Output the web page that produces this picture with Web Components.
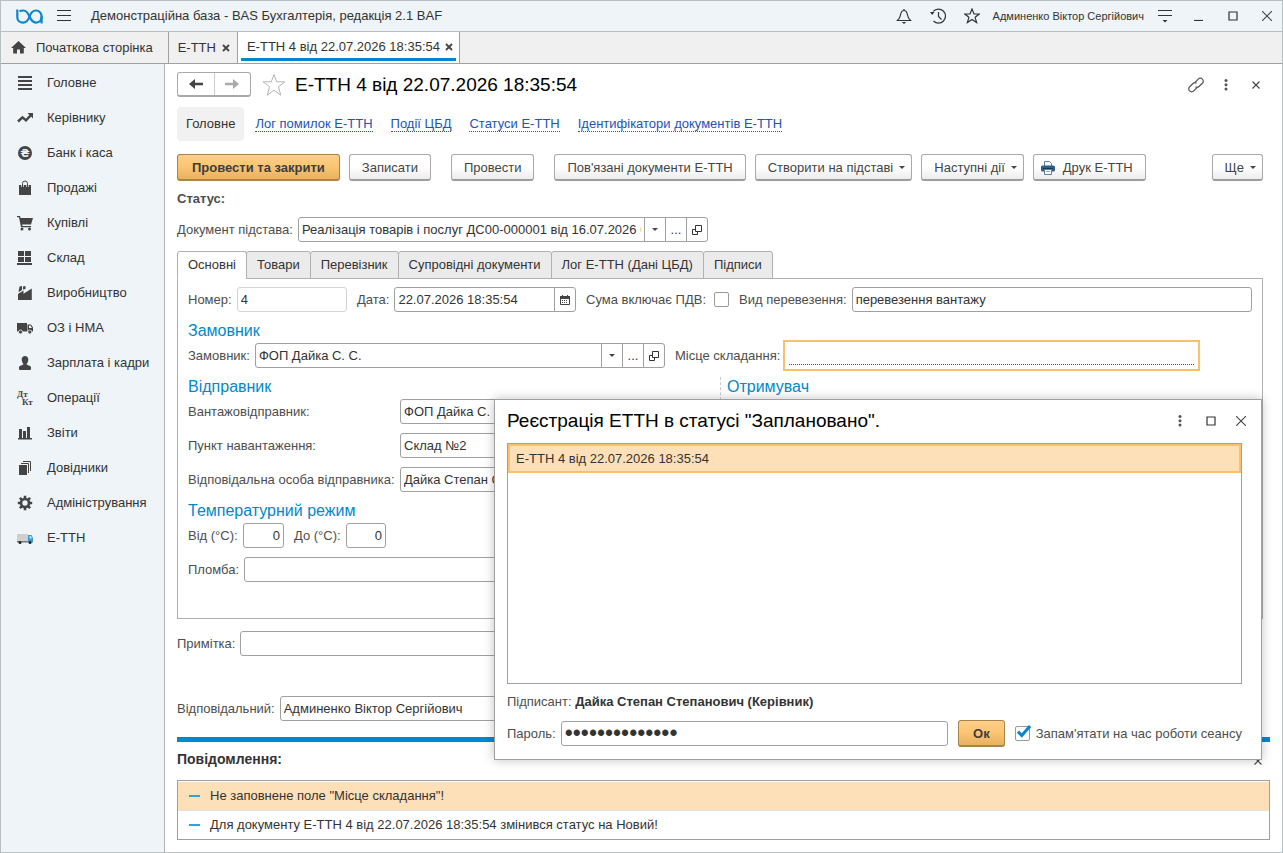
<!DOCTYPE html>
<html lang="uk">
<head>
<meta charset="utf-8">
<title>Е-ТТН 4 від 22.07.2026 18:35:54</title>
<style>
  html, body { margin: 0; height: 100%; }
  body {
    font-family: "Liberation Sans", Arial, sans-serif;
    font-size: 13px;
    line-height: 16px;
    color: #333;
    --bas-line: #a0a0a0;
    --bas-frame: #b6bfc1;
    --bas-tint: #eef4f7;
    --bas-label: #4d4d4d;
    --bas-blue: #0088cc;
    --bas-amber: #fbc16a;
    --bas-peach: #fde0b8;
  }
</style>
</head>
<body>
<bas-app></bas-app>

<script>
const ICONS = {
  logo: ['0 0 27 15', '<g fill="none" stroke="#0a87cb" stroke-width="2.2"><path d="M1.3 .5V8.5C1.3 11.5 4 13.6 7 13.6 10.500 13.600 12.300 11 13.500 7.500 14.700 4 16.500 1.500 20 1.500 23.500 1.500 25.600 4.500 25.600 7.500V14.500"/><path d="M3.500 2.400C4.600 1.700 6 1.500 7.500 1.500 10.500 1.500 12 4 13.500 7.500 15 11 16.500 13.600 20 13.600 23.500 13.600 25.600 11 25.600 7.500"/></g>'],
  burger: ['0 0 14 12', '<path d="M0 .5h14M0 5.500h14M0 10.500h14" stroke="#333" fill="none"/>'],
  bell: ['0 0 16 16', '<path d="M1.500 12.500h13c-1.500-1.500-2.500-2.500-3-5.500C11 4 10.500 2.500 8 2.500S5 4 4.500 7c-.5 3-1.500 4-3 5.500zM8 2.500V1" fill="none" stroke="#333" stroke-width="1.200"/><path d="M6 14h4l-1 1.500H7z" fill="#333"/>'],
  history: ['0 0 16 16', '<path d="M3.300 3.400A7 7 0 1 1 3.500 13" fill="none" stroke="#333" stroke-width="1.200"/><path d="M8.500 4v4.500l3 3" fill="none" stroke="#333" stroke-width="1.200"/><path d="M0 4h4.500L2.200 7z" fill="#333"/>'],
  star: ['0 0 16 16', '<path d="M8 1l2 5h5.200l-4.100 3.300 1.500 5.200L8 11.500l-4.600 3 1.500-5.200L.8 6H6z" fill="none" stroke="currentColor" stroke-width="1.200"/>'],
  bigstar: ['0 0 24 24', '<path d="M12 1.500l2.700 7.300h8.200l-6.500 5 2.400 8.400L12 17.200l-6.800 5 2.400-8.400-6.500-5h8.200z" fill="#fff" stroke="#b4b4b4" stroke-width="1"/>'],
  settings: ['0 0 14 14', '<path d="M0 1.500h14M0 6.500h14" stroke="#333" stroke-width="1.200"/><path d="M4.500 11h5L7 13.500z" fill="#333"/>'],
  minimize: ['0 0 10 10', '<path d="M0 9.500h9" stroke="#333" stroke-width="1.200"/>'],
  maximize: ['0 0 10 10', '<path d="M1 1h8v8H1z" fill="none" stroke="#333" stroke-width="1.200"/>'],
  close: ['0 0 10 10', '<path d="M0 0l10 10M10 0L0 10" stroke="#444" stroke-width="1.100"/>'],
  tabclose: ['0 0 8 8', '<path d="M1 1l6 6M7 1L1 7" stroke="#444" stroke-width="1.800"/>'],
  smallclose: ['0 0 8 8', '<path d="M.5 .5l7 7M7.500 .5l-7 7" stroke="#444" stroke-width="1.100"/>'],
  home: ['0 0 15 13', '<path d="M7.500 0L0 7h2.200v5.500H6V8.500h3v4h3.800V7H15z" fill="#444"/>'],
  link: ['0 0 16 16', '<g fill="none" stroke="#555" stroke-width="1.200"><path d="M7 5.500l3.200-3.400a2.900 2.900 0 0 1 4.200 0 2.900 2.900 0 0 1 0 4.200L11 9.500c-1 1-2.500 1-3.500.3"/><path d="M9 10.500l-3.200 3.400a2.900 2.900 0 0 1-4.200 0 2.900 2.900 0 0 1 0-4.200L5 6.500c1-1 2.500-1 3.500-.3"/></g>'],
  dots: ['0 0 4 12', '<g fill="#555"><circle cx="2" cy="1.500" r="1.500"/><circle cx="2" cy="5.800" r="1.500"/><circle cx="2" cy="10.100" r="1.500"/></g>'],
  back: ['0 0 14 10', '<path d="M0 5l6-5v3.700h8v2.600H6V10z" fill="#444"/>'],
  forward: ['0 0 14 10', '<path d="M14 5L8 0v3.700H0v2.600h8V10z" fill="#aaa"/>'],
  caret: ['0 0 6 3', '<path d="M0 0h6L3 3z" fill="#444"/>'],
  open: ['0 0 10 10', '<path d="M3.500 .5h6v6h-6zM3.500 4.500h-3v5h5v-3" fill="none" stroke="#333"/>'],
  calendar: ['0 0 10 10', '<path d="M.5 1.500h9v8h-9z" fill="#fff" stroke="#444"/><path d="M0 1h10v3H0z" fill="#444"/><path d="M2.500 0v2M7.500 0v2" stroke="#444"/><path d="M2 5.500h6M2 7.500h6" stroke="#444" stroke-dasharray="1 1"/>'],
  printer: ['0 0 14 14', '<path d="M3.500 5V.5h5l2 2V5" fill="#fff" stroke="#5d7d9c"/><rect y="4.500" width="14" height="6" rx="1.500" fill="#2d5f8b"/><path d="M2 7.500h10" stroke="#12395c"/><path d="M3.500 8.500h7v5h-7z" fill="#fff" stroke="#5d7d9c"/><path d="M5 10.500h4" stroke="#9ab"/>'],
  main: ['0 0 16 16', '<path d="M1 1h14v2H1zM1 5h14v2H1zM1 9h14v2H1zM1 13h14v2H1z" fill="#444"/>'],
  trend: ['0 0 16 16', '<path d="M1 11.500l4.500-4.200 3.500 3L14 5" fill="none" stroke="#444" stroke-width="2.400"/><path d="M10.500 3H16v5.500z" fill="#444"/>'],
  money: ['0 0 16 16', '<circle cx="8" cy="8" r="7" fill="#444"/><text x="8" y="12" text-anchor="middle" font-family="DejaVu Sans, sans-serif" font-weight="bold" font-size="11" fill="#eef4f7">₴</text>'],
  bag: ['0 0 16 16', '<path d="M2 5h12v10H2z" fill="#444"/><path d="M5.500 7V4a2.500 2.500 0 0 1 5 0v3" fill="none" stroke="#eef4f7" stroke-width="2.400"/><path d="M5.500 7V3.500a2.500 2.500 0 0 1 5 0V7" fill="none" stroke="#444"/>'],
  cart: ['0 0 16 16', '<path d="M0 1h3l.6 2H16l-2 6.500H5.200l.3 1.500H14v1.300H4L2 2.300H0z" fill="#444"/><circle cx="5" cy="14" r="1.500" fill="#444"/><circle cx="12.500" cy="14" r="1.500" fill="#444"/>'],
  stock: ['0 0 16 16', '<path d="M1 1h6v5H1zM8 1h6v5H8zM1 7h6v5H1zM8 7h6v5H8zM0 13h15v2H0z" fill="#444"/>'],
  factory: ['0 0 16 16', '<path d="M1 15V9l5.500-3.500v3.300L14.800 3.500V15z" fill="#444"/><path d="M2.500 1.500L5 1v4L1.500 7.200zM6 1.500L8.500 1v3L6 4.500z" fill="#444"/>'],
  truck: ['0 0 16 16', '<path d="M0 3h10v8.500H0z" fill="#444"/><path d="M10.500 4.500H14l2 3v4h-5.500z" fill="#444"/><path d="M12 5.500h1.500L15 8h-3z" fill="#eef4f7"/><circle cx="3.500" cy="12" r="2" fill="#444" stroke="#eef4f7" stroke-width=".8"/><circle cx="12.800" cy="12" r="2" fill="#444" stroke="#eef4f7" stroke-width=".8"/>'],
  person: ['0 0 16 16', '<path d="M8 1c2 0 3.300 1.300 3.300 3.500S10 8.800 9.500 9.200c.5 1 4.500 1 4.500 3.300V14q0 1-1 1H3q-1 0-1-1v-1.500c0-2.300 4-2.300 4.500-3.300C6 8.800 4.700 6.700 4.700 4.500S6 1 8 1z" fill="#444"/>'],
  dtkt: ['0 0 16 16', '<g font-family="Liberation Serif, serif" font-weight="bold" font-size="9" fill="#444"><text x="0" y="7">Дт</text><text x="5" y="15">Кт</text></g>'],
  chart: ['0 0 16 16', '<path d="M2 4h3v9H2zM6 6h3v7H6zM10 2h3v11h-3zM1 13h14v1.500H1z" fill="#444"/>'],
  books: ['0 0 16 16', '<path d="M2 5h8v10H2z" fill="#444"/><path d="M4 3.500h7.500V13M6 1.500h7.500V11" fill="none" stroke="#444"/>'],
  gear: ['0 0 16 16', '<circle cx="8" cy="8" r="4" fill="none" stroke="#444" stroke-width="2.600"/><path d="M8 .8v2.500M8 12.700v2.500M.8 8h2.500M12.700 8h2.500M2.900 2.900l1.800 1.800M11.300 11.300l1.800 1.800M13.100 2.900l-1.800 1.800M4.700 11.300l-1.800 1.800" stroke="#444" stroke-width="2.600"/>'],
  ettn: ['0 0 16 16', '<path d="M0 4h11v7H0z" fill="#cfcfcf"/><path d="M0 11h16v1.500H0z" fill="#777"/><path d="M11 5h3.500L16 8v4h-5z" fill="#3a9bd0"/><path d="M12.500 6h1.500l1 2.500h-2.500z" fill="#bfe2f5"/><circle cx="3" cy="12.500" r="1.500" fill="#222"/><circle cx="13" cy="12.500" r="1.500" fill="#222"/>'],
};

class BasIcon extends HTMLElement {
  connectedCallback() {
    const [box, body] = ICONS[this.getAttribute('name')];
    const [, , w, h] = box.split(' ');
    this.attachShadow({ mode: 'open' }).innerHTML = `
      <style>
        :host { display: inline-flex; flex-shrink: 0; }
        svg { display: block; }
      </style>
      <svg width="${w}" height="${h}" viewBox="${box}" aria-hidden="true">${body}</svg>
    `;
  }
}

/* Push button: default, primary (amber) or with a menu caret */
class BasButton extends HTMLElement {
  connectedCallback() {
    const icon = this.getAttribute('icon');
    this.attachShadow({ mode: 'open', delegatesFocus: true }).innerHTML = `
      <style>
        :host { display: block; flex-shrink: 0; }
        button {
          display: flex;
          align-items: center;
          box-sizing: border-box;
          height: 27px;
          padding: 1px 12px 0;
          border: 1px solid #a9a9a9;
          border-bottom: 2px solid #9c9c9c;
          border-radius: 3px;
          background: linear-gradient(#fff 50%, #ececec);
          font: inherit;
          color: #444;
          white-space: nowrap;
        }
        :host([primary]) button {
          padding: 1px 14px 0;
          border-color: #a8834a;
          background: linear-gradient(#fdcf8c, #fbc471 50%, #e9b163);
          font-weight: bold;
          color: #3d3d3d;
        }
        :host([menu]) button { gap: 6px; padding-right: 6px; }
        :host([icon]) button { gap: 8px; padding-left: 7px; }
      </style>
      <button type="button">
        ${icon ? `<bas-icon name="${icon}"></bas-icon>` : ''}
        <slot></slot>
        ${this.hasAttribute('menu') ? '<bas-icon name="caret"></bas-icon>' : ''}
      </button>
    `;
  }
}

class BasIconButton extends HTMLElement {
  connectedCallback() {
    this.attachShadow({ mode: 'open' }).innerHTML = `
      <style>
        :host { display: flex; }
        button {
          display: flex;
          align-items: center;
          justify-content: center;
          width: 100%;
          padding: 0;
          border: 0;
          background: none;
          color: #333;
        }
      </style>
      <button type="button" aria-label="${this.getAttribute('label')}">
        <bas-icon name="${this.getAttribute('name')}"></bas-icon>
      </button>
    `;
  }
}

/* Labelled input with optional choice buttons: list, more, open, calendar */
class BasField extends HTMLElement {
  connectedCallback() {
    const attr = (name, fallback = '') => this.getAttribute(name) || fallback;
    const titles = { list: 'Вибрати зі списку', more: 'Показати всі', open: 'Відкрити', calendar: 'Календар' };
    const faces = { list: '<bas-icon name="caret"></bas-icon>', more: '...', open: '<bas-icon name="open"></bas-icon>', calendar: '<bas-icon name="calendar"></bas-icon>' };
    const buttons = attr('buttons').split(' ').filter(Boolean)
      .map(b => `<button type="button" aria-label="${titles[b]}">${faces[b]}</button>`).join('');

    this.attachShadow({ mode: 'open' }).innerHTML = `
      <style>
        :host { display: flex; align-items: center; gap: 5px; min-width: 0; }
        label { flex: 0 0 auto; width: var(--label-width, auto); color: var(--bas-label); white-space: nowrap; }
        .box {
          display: flex;
          flex: 1 1 0;
          min-width: 0;
          box-sizing: border-box;
          height: 25px;
          border: 1px solid var(--bas-line);
          border-radius: 3px;
          background: #fff;
        }
        input {
          flex: 1;
          min-width: 0;
          width: 100%;
          box-sizing: border-box;
          padding: 0 3px;
          border: 0;
          outline: 0;
          background: none;
          font: inherit;
          color: #333;
        }
        input[type="password"] { font-size: 23px; }
        button {
          display: flex;
          align-items: center;
          justify-content: center;
          box-sizing: border-box;
          width: 21px;
          padding: 0;
          border: 0;
          border-left: 1px solid var(--bas-line);
          background: none;
          font: inherit;
          color: #333;
        }
        :host([numeric]) input { text-align: right; }
        :host([readonly]) .box { border-color: #d4d4d4; }
        :host([required]) { gap: 3px; }
        :host([required]) .box {
          height: 31px;
          margin: -3px 0;
          padding: 4px;
          border: 2px solid var(--bas-amber);
          border-radius: 0;
        }
        :host([required]) input { border-bottom: 1px dotted #f00; }
      </style>
      <label for="input">${attr('label')}</label>
      <div class="box">
        <input id="input" type="${attr('type', 'text')}" ${this.hasAttribute('readonly') ? 'readonly' : ''}>
        ${buttons}
      </div>
    `;
    this.shadowRoot.getElementById('input').value = attr('value');
  }
}

class BasCheckbox extends HTMLElement {
  connectedCallback() {
    this.attachShadow({ mode: 'open' }).innerHTML = `
      <style>
        :host { display: block; flex-shrink: 0; color: var(--bas-label); }
        label { display: flex; align-items: center; gap: 6px; white-space: nowrap; }
        :host([label-first]) label { flex-direction: row-reverse; gap: 8px; }
        .mark { position: relative; display: flex; }
        input {
          appearance: none;
          width: 15px;
          height: 15px;
          margin: 0;
          border: 1px solid #999;
          border-radius: 2px;
          background: #fff;
        }
        svg { position: absolute; left: 2px; bottom: 3px; display: none; }
        input:checked + svg { display: block; }
      </style>
      <label>
        <span class="mark">
          <input type="checkbox" ${this.hasAttribute('checked') ? 'checked' : ''}>
          <svg width="14" height="13" viewBox="0 0 14 13"><path d="M1 6.500l3.800 4L13 1" fill="none" stroke="#0a87cb" stroke-width="3"/></svg>
        </span>
        <slot></slot>
      </label>
    `;
  }
}

class BasTitlebar extends HTMLElement {
  connectedCallback() {
    this.attachShadow({ mode: 'open' }).innerHTML = `
      <style>
        :host {
          display: flex;
          align-items: center;
          box-sizing: border-box;
          height: 31px;
          padding: 0 8px 0 15px;
          border-bottom: 1px solid var(--bas-frame);
          background: var(--bas-tint);
        }
        .menu { margin: 0 20px 0 14px; }
        .tools { display: flex; align-items: center; margin-left: auto; }
        .tools bas-icon-button { width: 34px; }
        .user { margin: 0 4px; font-size: 11px; }
        .tools .close { width: 14px; margin-left: 10px; }
      </style>
      <bas-icon name="logo"></bas-icon>
      <bas-icon-button class="menu" name="burger" label="Меню"></bas-icon-button>
      <span>Демонстраційна база - BAS Бухгалтерія, редакція 2.1 BAF</span>
      <div class="tools">
        <bas-icon-button name="bell" label="Сповіщення"></bas-icon-button>
        <bas-icon-button name="history" label="Історія"></bas-icon-button>
        <bas-icon-button name="star" label="Вибране"></bas-icon-button>
        <span class="user">Админенко Віктор Сергійович</span>
        <bas-icon-button name="settings" label="Налаштування"></bas-icon-button>
        <bas-icon-button name="minimize" label="Згорнути"></bas-icon-button>
        <bas-icon-button name="maximize" label="Розгорнути"></bas-icon-button>
        <bas-icon-button class="close" name="close" label="Закрити"></bas-icon-button>
      </div>
    `;
  }
}

class BasTab extends HTMLElement {
  connectedCallback() {
    this.attachShadow({ mode: 'open' }).innerHTML = `
      <style>
        :host {
          display: flex;
          align-items: center;
          gap: 6px;
          padding: 0 7px 0 9px;
          border-right: 1px solid var(--bas-line);
          white-space: nowrap;
        }
        :host([home]) { gap: 10px; padding: 0 15px 0 10px; }
        :host([active]) {
          gap: 5px;
          padding: 0;
          background: #fff;
        }
        .face { display: flex; align-items: center; gap: inherit; height: 100%; }
        :host([active]) .face {
          box-sizing: border-box;
          height: 29px;
          align-self: flex-start;
          margin: 0 3px;
          padding: 4px 3px 0 6px;
          border-bottom: 3px solid var(--bas-blue);
        }
      </style>
      <div class="face">
        ${this.hasAttribute('home') ? '<bas-icon name="home"></bas-icon>' : ''}
        <slot></slot>
        ${this.hasAttribute('home') ? '' : '<bas-icon-button name="tabclose" label="Закрити"></bas-icon-button>'}
      </div>
    `;
  }
}

class BasTabstrip extends HTMLElement {
  connectedCallback() {
    this.attachShadow({ mode: 'open' }).innerHTML = `
      <style>
        :host {
          display: flex;
          box-sizing: border-box;
          height: 32px;
          border-bottom: 1px solid var(--bas-line);
          background: #f0f0f0;
        }
      </style>
      <bas-tab home>Початкова сторінка</bas-tab>
      <bas-tab>Е-ТТН</bas-tab>
      <bas-tab active>Е-ТТН 4 від 22.07.2026 18:35:54</bas-tab>
    `;
  }
}

class BasSidebar extends HTMLElement {
  connectedCallback() {
    const sections = [
      ['main', 'Головне'], ['trend', 'Керівнику'], ['money', 'Банк і каса'],
      ['bag', 'Продажі'], ['cart', 'Купівлі'], ['stock', 'Склад'],
      ['factory', 'Виробництво'], ['truck', 'ОЗ і НМА'], ['person', 'Зарплата і кадри'],
      ['dtkt', 'Операції'], ['chart', 'Звіти'], ['books', 'Довідники'],
      ['gear', 'Адміністрування'], ['ettn', 'Е-ТТН'],
    ];
    this.attachShadow({ mode: 'open' }).innerHTML = `
      <style>
        :host {
          display: block;
          box-sizing: border-box;
          width: 164px;
          padding-top: 1px;
          border-right: 1px solid #b0b4b6;
          background: var(--bas-tint);
        }
        a {
          display: flex;
          align-items: center;
          gap: 14px;
          height: 35px;
          padding-left: 16px;
          color: #333;
          text-decoration: none;
          white-space: nowrap;
        }
      </style>
      <nav>
        ${sections.map(([icon, text]) => `<a href="#"><bas-icon name="${icon}"></bas-icon><span>${text}</span></a>`).join('')}
      </nav>
    `;
  }
}

class BasFormHeader extends HTMLElement {
  connectedCallback() {
    this.attachShadow({ mode: 'open' }).innerHTML = `
      <style>
        :host { display: block; }
        .top { display: flex; align-items: center; height: 25px; }
        .history {
          display: flex;
          box-sizing: border-box;
          width: 74px;
          height: 25px;
          margin-right: 11px;
          border: 1px solid #a9a9a9;
          border-bottom-width: 2px;
          border-radius: 3px;
        }
        .history bas-icon-button { flex: 1; }
        .history bas-icon-button + bas-icon-button { border-left: 1px solid #ccc; }
        h1 { margin: 0 0 0 9px; font-size: 19px; line-height: 24px; font-weight: normal; color: #000; }
        .tools { display: flex; margin-left: auto; }
        .tools bas-icon-button { width: 30px; }
        .links { display: flex; align-items: center; gap: 18px; margin-top: 10px; }
        .current {
          margin-right: -7px;
          padding: 9px;
          border-radius: 4px;
          background: #f1f1f1;
        }
        a { color: #2253b5; text-decoration: none; border-bottom: 1px dotted #2253b5; line-height: 14px; }
      </style>
      <div class="top">
        <div class="history">
          <bas-icon-button name="back" label="Назад"></bas-icon-button>
          <bas-icon-button name="forward" label="Вперед"></bas-icon-button>
        </div>
        <bas-icon name="bigstar"></bas-icon>
        <h1>Е-ТТН 4 від 22.07.2026 18:35:54</h1>
        <div class="tools">
          <bas-icon-button name="link" label="Посилання"></bas-icon-button>
          <bas-icon-button name="dots" label="Ще"></bas-icon-button>
          <bas-icon-button name="smallclose" label="Закрити"></bas-icon-button>
        </div>
      </div>
      <nav class="links">
        <span class="current">Головне</span>
        <a href="#">Лог помилок Е-ТТН</a>
        <a href="#">Події ЦБД</a>
        <a href="#">Статуси Е-ТТН</a>
        <a href="#">Ідентифікатори документів Е-ТТН</a>
      </nav>
    `;
  }
}

class BasToolbar extends HTMLElement {
  connectedCallback() {
    this.attachShadow({ mode: 'open' }).innerHTML = `
      <style>
        :host { display: flex; gap: 20px; }
        .group { display: flex; gap: 9px; }
        .group:last-child { margin-left: auto; }
      </style>
      <div class="group">
        <bas-button primary>Провести та закрити</bas-button>
        <bas-button>Записати</bas-button>
      </div>
      <div class="group">
        <bas-button>Провести</bas-button>
      </div>
      <div class="group">
        <bas-button>Пов'язані документи Е-ТТН</bas-button>
        <bas-button menu>Створити на підставі</bas-button>
        <bas-button menu>Наступні дії</bas-button>
        <bas-button icon="printer">Друк Е-ТТН</bas-button>
      </div>
      <div class="group">
        <bas-button menu>Ще</bas-button>
      </div>
    `;
  }
}

/* Titled group of rows inside the page */
class BasGroup extends HTMLElement {
  connectedCallback() {
    this.attachShadow({ mode: 'open' }).innerHTML = `
      <style>
        :host { display: flex; flex-direction: column; gap: 9px; }
        h2 {
          margin: 0 0 -7px;
          font-size: 16px;
          line-height: 20px;
          font-weight: normal;
          color: var(--bas-blue);
        }
      </style>
      <h2>${this.getAttribute('heading')}</h2>
      <slot></slot>
    `;
  }
}

class BasPages extends HTMLElement {
  connectedCallback() {
    const pages = ['Основні', 'Товари', 'Перевізник', 'Супровідні документи', 'Лог Е-ТТН (Дані ЦБД)', 'Підписи'];
    this.attachShadow({ mode: 'open' }).innerHTML = `
      <style>
        :host { display: block; }
        .tabs { display: flex; margin-bottom: -1px; }
        button {
          box-sizing: border-box;
          height: 28px;
          margin-left: -1px;
          padding: 0 10px;
          border: 1px solid #b0b0b0;
          border-radius: 3px 3px 0 0;
          background: #ebebeb;
          font: inherit;
          color: #333;
          white-space: nowrap;
        }
        button:first-child { margin-left: 0; }
        button[aria-selected="true"] { border-bottom-color: #fff; background: #fff; }
        .page { padding: 8px 10px 36px; border: 1px solid #b0b0b0; }
      </style>
      <div class="tabs" role="tablist">
        ${pages.map((p, i) => `<button type="button" role="tab" aria-selected="${i === 0}">${p}</button>`).join('')}
      </div>
      <div class="page" role="tabpanel"><slot></slot></div>
    `;
  }
}

class BasDocument extends HTMLElement {
  connectedCallback() {
    this.attachShadow({ mode: 'open' }).innerHTML = `
      <style>
        :host { display: block; padding: 8px 19px 16px 12px; }
        bas-form-header { margin-right: -8px; }
        bas-toolbar { margin-top: 13px; }
        .status { margin: 10px 0; font-weight: bold; color: var(--bas-label); }
        .basis { width: 531px; }
        bas-pages { margin-top: 9px; }
        .rows { display: flex; flex-direction: column; gap: 9px; }
        .row { display: flex; align-items: center; gap: 10px; }
        .number { width: 159px; }
        .date { width: 219px; }
        .kind { flex: 1; }
        .customer { width: 477px; }
        .place { width: 525px; }
        .parties { display: grid; grid-template-columns: 1fr 1fr; }
        .sender { --label-width: 207px; padding-right: 8px; }
        .receiver { padding-left: 6px; border-left: 1px dashed #ccc; }
        .from { width: 96px; }
        .to { width: 92px; }
        .note { margin-top: 12px; width: 700px; }
        .owner { margin-top: 40px; width: 500px; }
        .seal { width: 524px; }
      </style>
      <bas-form-header></bas-form-header>
      <bas-toolbar></bas-toolbar>
      <div class="status">Статус:</div>
      <bas-field class="basis" label="Документ підстава:" value="Реалізація товарів і послуг ДС00-000001 від 16.07.2026 0:00:00" buttons="list more open"></bas-field>
      <bas-pages>
        <div class="rows">
          <div class="row">
            <bas-field class="number" label="Номер:" value="4" readonly></bas-field>
            <bas-field class="date" label="Дата:" value="22.07.2026 18:35:54" buttons="calendar"></bas-field>
            <bas-checkbox label-first>Сума включає ПДВ:</bas-checkbox>
            <bas-field class="kind" label="Вид перевезення:" value="перевезення вантажу"></bas-field>
          </div>
          <bas-group heading="Замовник">
            <div class="row">
              <bas-field class="customer" label="Замовник:" value="ФОП Дайка С. С." buttons="list more open"></bas-field>
              <bas-field class="place" label="Місце складання:" required></bas-field>
            </div>
          </bas-group>
          <div class="parties">
            <bas-group class="sender" heading="Відправник">
              <bas-field label="Вантажовідправник:" value="ФОП Дайка С. С."></bas-field>
              <bas-field label="Пункт навантаження:" value="Склад №2"></bas-field>
              <bas-field label="Відповідальна особа відправника:" value="Дайка Степан Степанович"></bas-field>
            </bas-group>
            <bas-group class="receiver" heading="Отримувач"></bas-group>
          </div>
          <bas-group heading="Температурний режим">
            <div class="row">
              <bas-field class="from" label="Від (°C):" value="0" numeric></bas-field>
              <bas-field class="to" label="До (°C):" value="0" numeric></bas-field>
            </div>
            <bas-field class="seal" label="Пломба:"></bas-field>
          </bas-group>
        </div>
      </bas-pages>
      <bas-field class="note" label="Примітка:"></bas-field>
      <bas-field class="owner" label="Відповідальний:" value="Админенко Віктор Сергійович"></bas-field>
    `;
  }
}

class BasMessages extends HTMLElement {
  connectedCallback() {
    this.attachShadow({ mode: 'open' }).innerHTML = `
      <style>
        :host { display: block; margin: 0 12px; border-top: 5px solid var(--bas-blue); }
        header { display: flex; align-items: center; justify-content: space-between; height: 38px; padding-right: 8px; }
        h2 { margin: 0 0 4px; font-size: 14px; line-height: 16px; }
        ul { margin: 0; padding: 1px 0; border: 1px solid var(--bas-line); list-style: none; }
        li {
          display: flex;
          align-items: center;
          gap: 10px;
          height: 28px;
          padding-left: 11px;
          box-sizing: border-box;
        }
        li::before { content: ""; width: 11px; height: 2px; background: #2ba6dd; }
        li + li { border-top: 1px solid #e2e2e2; }
        .picked { background: var(--bas-peach); }
      </style>
      <header>
        <h2>Повідомлення:</h2>
        <bas-icon-button name="smallclose" label="Закрити"></bas-icon-button>
      </header>
      <ul>
        <li class="picked">Не заповнене поле "Місце складання"!</li>
        <li>Для документу Е-ТТН 4 від 22.07.2026 18:35:54 змінився статус на Новий!</li>
      </ul>
    `;
  }
}

class BasDialog extends HTMLElement {
  connectedCallback() {
    this.attachShadow({ mode: 'open' }).innerHTML = `
      <style>
        :host {
          display: block;
          box-sizing: border-box;
          padding: 8px 19px 12px 12px;
          border: 1px solid var(--bas-line);
          background: #fff;
          box-shadow: 0 0 10px rgba(0, 0, 0, .25);
        }
        header { display: flex; align-items: center; height: 25px; margin-bottom: 10px; }
        h2 { flex: 1; margin: 0; font-size: 19px; line-height: 24px; font-weight: normal; color: #000; }
        header bas-icon-button { width: 31px; }
        header bas-icon-button:last-child { width: 30px; margin-right: -14px; }
        .list { box-sizing: border-box; height: 241px; border: 1px solid var(--bas-line); }
        .item {
          box-sizing: border-box;
          height: 29px;
          padding: 5px 6px;
          border: 2px solid var(--bas-amber);
          background: var(--bas-peach);
        }
        .signer { margin: 10px 0; color: var(--bas-label); }
        .signer b { color: #333; }
        .row { display: flex; align-items: center; gap: 10px; }
        bas-field { flex: 1; }
      </style>
      <header>
        <h2>Реєстрація ЕТТН в статусі "Заплановано".</h2>
        <bas-icon-button name="dots" label="Ще"></bas-icon-button>
        <bas-icon-button name="maximize" label="Розгорнути"></bas-icon-button>
        <bas-icon-button name="close" label="Закрити"></bas-icon-button>
      </header>
      <div class="list"><div class="item">Е-ТТН 4 від 22.07.2026 18:35:54</div></div>
      <div class="signer">Підписант: <b>Дайка Степан Степанович (Керівник)</b></div>
      <div class="row">
        <bas-field label="Пароль:" type="password" value="password123456"></bas-field>
        <bas-button primary>Ок</bas-button>
        <bas-checkbox checked>Запам'ятати на час роботи сеансу</bas-checkbox>
      </div>
    `;
  }
}

class BasApp extends HTMLElement {
  connectedCallback() {
    this.attachShadow({ mode: 'open' }).innerHTML = `
      <style>
        :host {
          position: relative;
          display: flex;
          flex-direction: column;
          box-sizing: border-box;
          min-height: 100%;
          border: 1px solid var(--bas-frame);
          background: #fff;
        }
        .body { display: flex; flex: 1; }
        bas-sidebar { flex-shrink: 0; }
        main { display: flex; flex-direction: column; flex: 1; min-width: 0; padding-bottom: 12px; }
        bas-document { flex: 1; }
        /* floats over the document */
        bas-dialog { position: absolute; top: 398px; right: 20px; width: 768px; }
      </style>
      <bas-titlebar></bas-titlebar>
      <bas-tabstrip></bas-tabstrip>
      <div class="body">
        <bas-sidebar></bas-sidebar>
        <main>
          <bas-document></bas-document>
          <bas-messages></bas-messages>
        </main>
      </div>
      <bas-dialog role="dialog" aria-label="Реєстрація ЕТТН"></bas-dialog>
    `;
  }
}

customElements.define('bas-icon', BasIcon);
customElements.define('bas-button', BasButton);
customElements.define('bas-icon-button', BasIconButton);
customElements.define('bas-field', BasField);
customElements.define('bas-checkbox', BasCheckbox);
customElements.define('bas-titlebar', BasTitlebar);
customElements.define('bas-tab', BasTab);
customElements.define('bas-tabstrip', BasTabstrip);
customElements.define('bas-sidebar', BasSidebar);
customElements.define('bas-form-header', BasFormHeader);
customElements.define('bas-toolbar', BasToolbar);
customElements.define('bas-group', BasGroup);
customElements.define('bas-pages', BasPages);
customElements.define('bas-document', BasDocument);
customElements.define('bas-messages', BasMessages);
customElements.define('bas-dialog', BasDialog);
customElements.define('bas-app', BasApp);
</script>
</body>
</html>
